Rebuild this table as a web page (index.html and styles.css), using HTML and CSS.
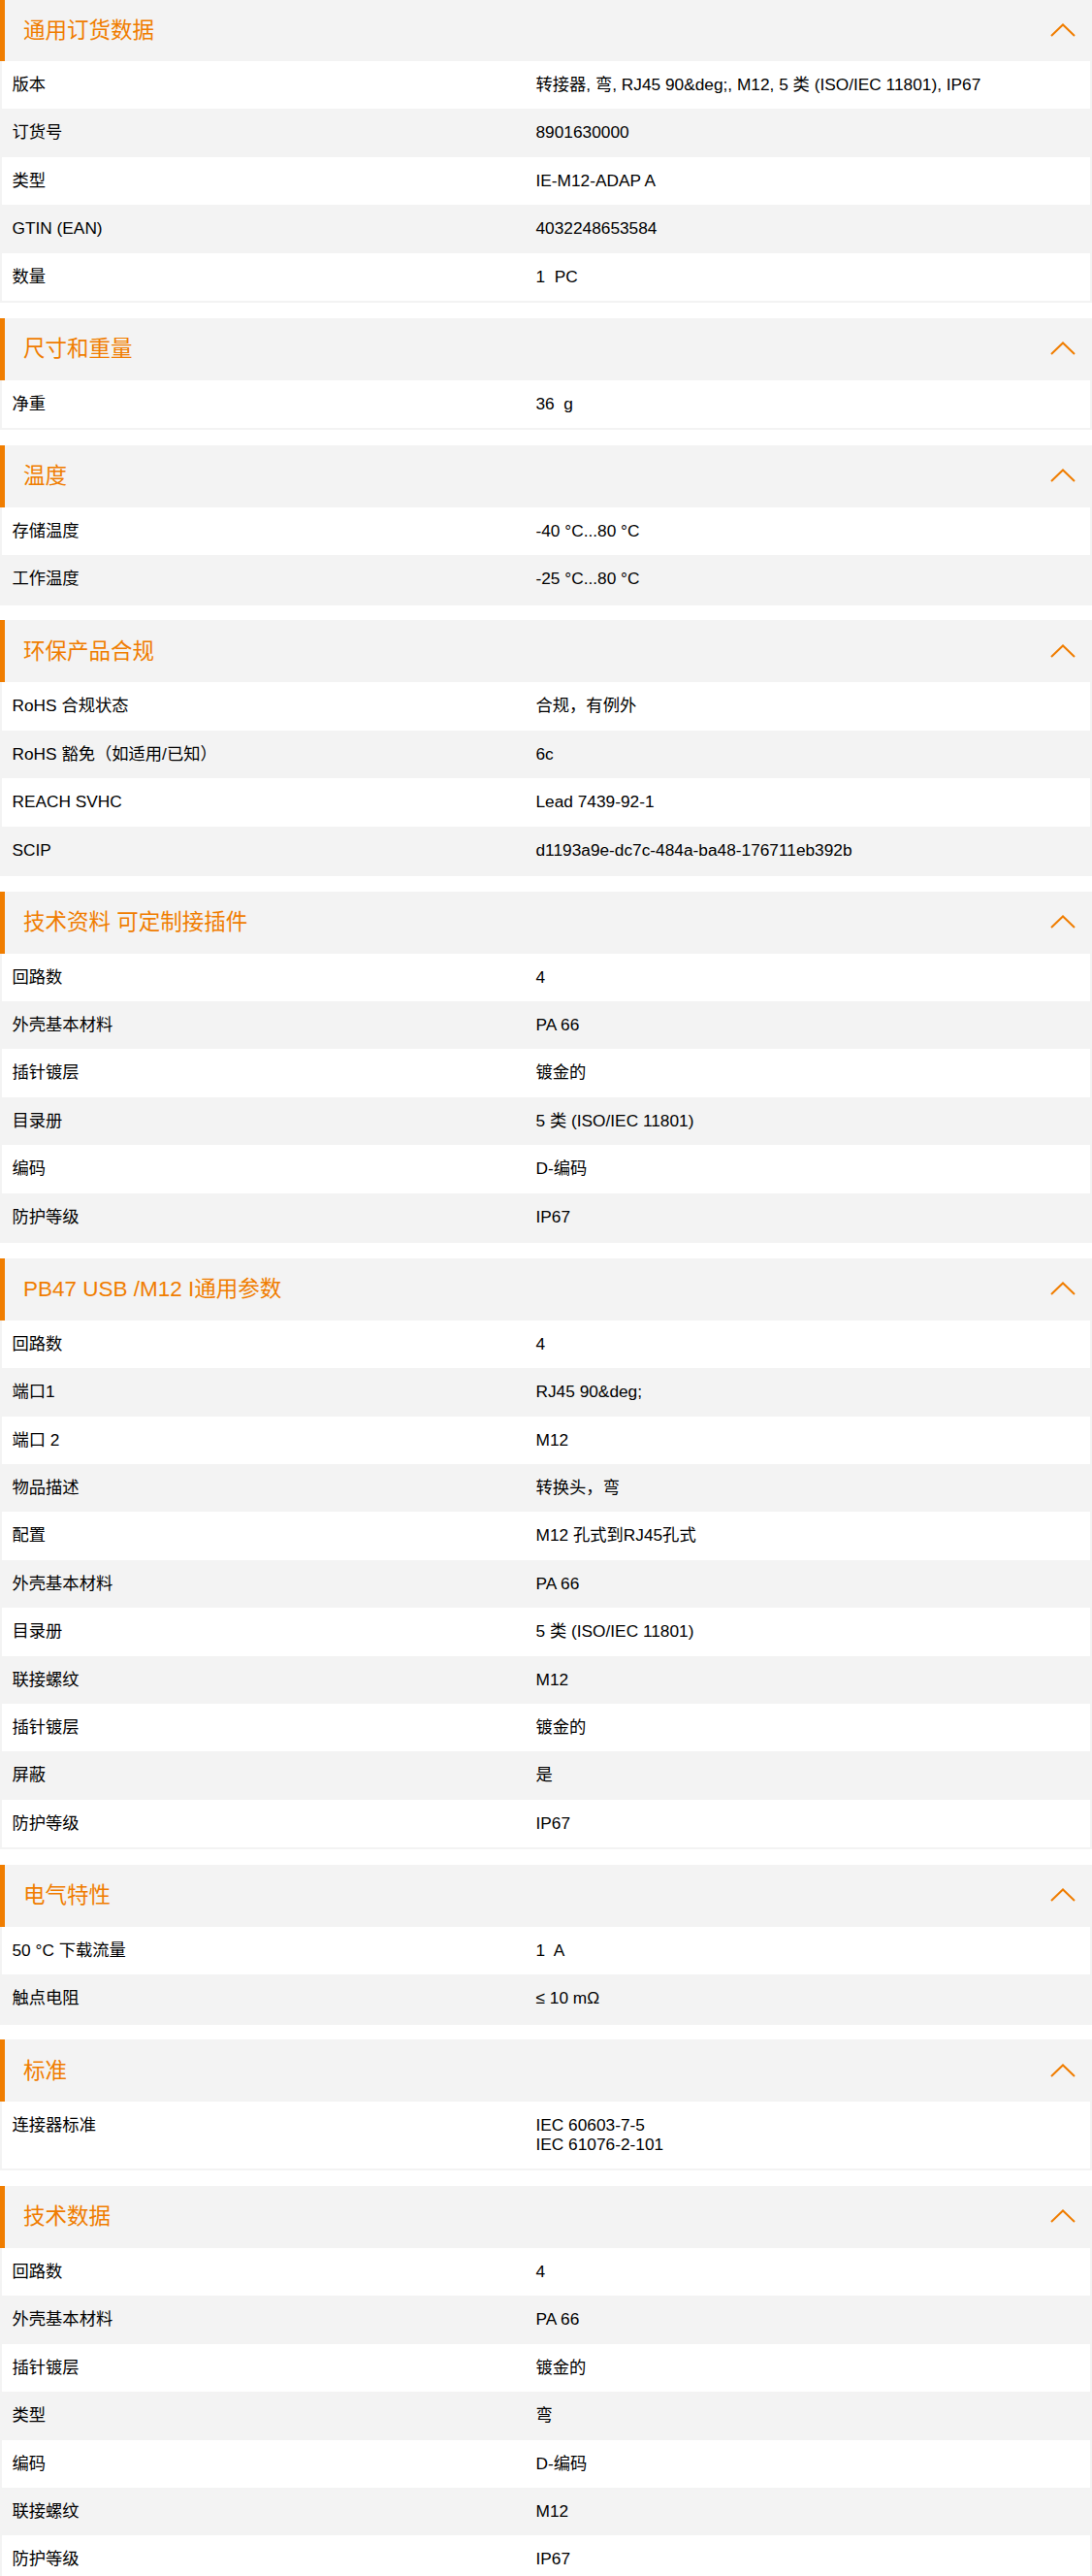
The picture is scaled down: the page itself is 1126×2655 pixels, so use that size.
FILE: index.html
```html
<!DOCTYPE html>
<html lang="zh-CN">
<head>
<meta charset="utf-8">
<title>产品数据</title>
<link rel="stylesheet" href="styles.css">
</head>
<body>
<div class="specs">

<section class="sec">
  <header class="sec-head"><h2 class="sec-title">通用订货数据</h2><svg class="chev" viewBox="0 0 26 14"><polyline points="1,13 13,1.5 25,13"/></svg></header>
  <div class="sec-body">
    <div class="row"><div class="lbl">版本</div><div class="val">转接器, 弯, RJ45 90&amp;deg;, M12, 5 类 (ISO/IEC 11801), IP67</div></div>
    <div class="row"><div class="lbl">订货号</div><div class="val">8901630000</div></div>
    <div class="row"><div class="lbl">类型</div><div class="val">IE-M12-ADAP A</div></div>
    <div class="row"><div class="lbl">GTIN (EAN)</div><div class="val">4032248653584</div></div>
    <div class="row"><div class="lbl">数量</div><div class="val">1&nbsp; PC</div></div>
  </div>
</section>

<section class="sec">
  <header class="sec-head"><h2 class="sec-title">尺寸和重量</h2><svg class="chev" viewBox="0 0 26 14"><polyline points="1,13 13,1.5 25,13"/></svg></header>
  <div class="sec-body">
    <div class="row"><div class="lbl">净重</div><div class="val">36&nbsp; g</div></div>
  </div>
</section>

<section class="sec">
  <header class="sec-head"><h2 class="sec-title">温度</h2><svg class="chev" viewBox="0 0 26 14"><polyline points="1,13 13,1.5 25,13"/></svg></header>
  <div class="sec-body">
    <div class="row"><div class="lbl">存储温度</div><div class="val">-40 °C...80 °C</div></div>
    <div class="row"><div class="lbl">工作温度</div><div class="val">-25 °C...80 °C</div></div>
  </div>
</section>

<section class="sec">
  <header class="sec-head"><h2 class="sec-title">环保产品合规</h2><svg class="chev" viewBox="0 0 26 14"><polyline points="1,13 13,1.5 25,13"/></svg></header>
  <div class="sec-body">
    <div class="row"><div class="lbl">RoHS 合规状态</div><div class="val">合规，有例外</div></div>
    <div class="row"><div class="lbl">RoHS 豁免（如适用/已知）</div><div class="val">6c</div></div>
    <div class="row"><div class="lbl">REACH SVHC</div><div class="val">Lead 7439-92-1</div></div>
    <div class="row"><div class="lbl">SCIP</div><div class="val">d1193a9e-dc7c-484a-ba48-176711eb392b</div></div>
  </div>
</section>

<section class="sec">
  <header class="sec-head"><h2 class="sec-title">技术资料 可定制接插件</h2><svg class="chev" viewBox="0 0 26 14"><polyline points="1,13 13,1.5 25,13"/></svg></header>
  <div class="sec-body">
    <div class="row"><div class="lbl">回路数</div><div class="val">4</div></div>
    <div class="row"><div class="lbl">外壳基本材料</div><div class="val">PA 66</div></div>
    <div class="row"><div class="lbl">插针镀层</div><div class="val">镀金的</div></div>
    <div class="row"><div class="lbl">目录册</div><div class="val">5 类 (ISO/IEC 11801)</div></div>
    <div class="row"><div class="lbl">编码</div><div class="val">D-编码</div></div>
    <div class="row"><div class="lbl">防护等级</div><div class="val">IP67</div></div>
  </div>
</section>

<section class="sec">
  <header class="sec-head"><h2 class="sec-title">PB47 USB /M12 I通用参数</h2><svg class="chev" viewBox="0 0 26 14"><polyline points="1,13 13,1.5 25,13"/></svg></header>
  <div class="sec-body">
    <div class="row"><div class="lbl">回路数</div><div class="val">4</div></div>
    <div class="row"><div class="lbl">端口1</div><div class="val">RJ45 90&amp;deg;</div></div>
    <div class="row"><div class="lbl">端口 2</div><div class="val">M12</div></div>
    <div class="row"><div class="lbl">物品描述</div><div class="val">转换头，弯</div></div>
    <div class="row"><div class="lbl">配置</div><div class="val">M12 孔式到RJ45孔式</div></div>
    <div class="row"><div class="lbl">外壳基本材料</div><div class="val">PA 66</div></div>
    <div class="row"><div class="lbl">目录册</div><div class="val">5 类 (ISO/IEC 11801)</div></div>
    <div class="row"><div class="lbl">联接螺纹</div><div class="val">M12</div></div>
    <div class="row"><div class="lbl">插针镀层</div><div class="val">镀金的</div></div>
    <div class="row"><div class="lbl">屏蔽</div><div class="val">是</div></div>
    <div class="row"><div class="lbl">防护等级</div><div class="val">IP67</div></div>
  </div>
</section>

<section class="sec">
  <header class="sec-head"><h2 class="sec-title">电气特性</h2><svg class="chev" viewBox="0 0 26 14"><polyline points="1,13 13,1.5 25,13"/></svg></header>
  <div class="sec-body">
    <div class="row"><div class="lbl">50 °C 下载流量</div><div class="val">1&nbsp; A</div></div>
    <div class="row"><div class="lbl">触点电阻</div><div class="val">≤ 10 mΩ</div></div>
  </div>
</section>

<section class="sec">
  <header class="sec-head"><h2 class="sec-title">标准</h2><svg class="chev" viewBox="0 0 26 14"><polyline points="1,13 13,1.5 25,13"/></svg></header>
  <div class="sec-body">
    <div class="row"><div class="lbl">连接器标准</div><div class="val">IEC 60603-7-5<br>IEC 61076-2-101</div></div>
  </div>
</section>

<section class="sec">
  <header class="sec-head"><h2 class="sec-title">技术数据</h2><svg class="chev" viewBox="0 0 26 14"><polyline points="1,13 13,1.5 25,13"/></svg></header>
  <div class="sec-body">
    <div class="row"><div class="lbl">回路数</div><div class="val">4</div></div>
    <div class="row"><div class="lbl">外壳基本材料</div><div class="val">PA 66</div></div>
    <div class="row"><div class="lbl">插针镀层</div><div class="val">镀金的</div></div>
    <div class="row"><div class="lbl">类型</div><div class="val">弯</div></div>
    <div class="row"><div class="lbl">编码</div><div class="val">D-编码</div></div>
    <div class="row"><div class="lbl">联接螺纹</div><div class="val">M12</div></div>
    <div class="row"><div class="lbl">防护等级</div><div class="val">IP67</div></div>
  </div>
</section>

</div>
</body>
</html>
```

FILE: styles.css
```css
html, body {
  margin: 0;
  padding: 0;
  background: #ffffff;
}

body {
  font-family: "Liberation Sans", "Noto Sans CJK SC", sans-serif;
  color: #000000;
}

.specs {
  display: flex;
  flex-direction: column;
  gap: 15.7px;
}

.sec {
  display: flex;
  flex-direction: column;
}

.sec-head {
  height: 64px;
  box-sizing: border-box;
  background: #f3f3f3;
  border-left: 5px solid #f07d00;
  padding: 0 17px 1px 19px;
  display: flex;
  align-items: center;
  justify-content: space-between;
}

.sec:first-child .sec-head {
  height: 63px;
}

.sec-title {
  margin: 2px 0 0;
  font-size: 22.5px;
  font-weight: normal;
  line-height: 26px;
  color: #f07d00;
}

.chev {
  width: 26px;
  height: 14px;
  fill: none;
  stroke: #f07d00;
  stroke-width: 2;
}

.sec-body {
  background: #f3f3f3;
  padding: 0 2px 2px;
  display: flex;
  flex-direction: column;
}

.row {
  display: grid;
  grid-template-columns: 540px 1fr;
  padding: 15px 10px 15px 10.5px;
  font-size: 17.3px;
  line-height: 19.4px;
}

.row:nth-child(odd) {
  background: #ffffff;
}

.lbl,
.val {
  white-space: nowrap;
}
```
